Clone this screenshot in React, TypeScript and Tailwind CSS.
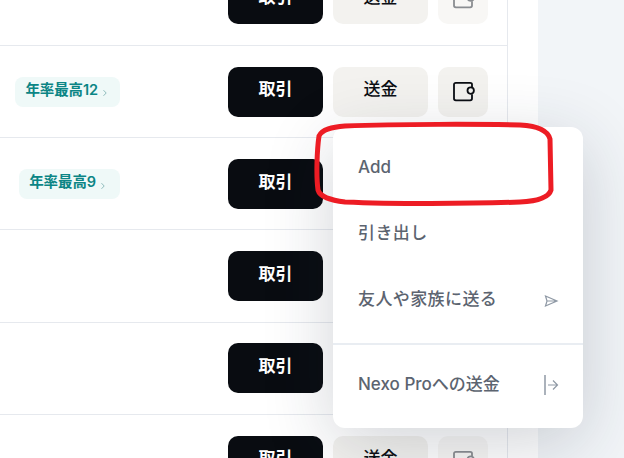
import React from "react";

const font = { fontFamily: '"Inter", "Noto Sans CJK JP", sans-serif' };

function WalletIcon({ active }: { active?: boolean }) {
  return (
    <svg
      width="24"
      height="24"
      viewBox="0 0 24 24"
      fill="none"
      stroke={active ? "#0b0e13" : "#8a8d91"}
      strokeWidth="1.8"
    >
      <path d="M21 7V4.5C21 3.4 20.2 2.8 19.2 2.8H4.8C3.7 2.8 3 3.5 3 4.6v14c0 1 .7 1.7 1.8 1.7h14.4c1 0 1.8-.7 1.8-1.7v-4.4" />
      <rect x="16.5" y="7.4" width="6.4" height="6.4" rx="3.2" />
    </svg>
  );
}

function Badge({ text, className }: { text: string; className: string }) {
  return (
    <div className={`flex items-center h-[30px] rounded-lg bg-[#eff9f8] text-[14.5px] font-semibold text-[#0b8585] pl-[10px] pb-[4px] ${className}`}>
      <span className="tracking-[-0.1px]">{text}</span>
      <svg width="8" height="8" viewBox="0 0 8 8" fill="none" stroke="#8fbcbc" strokeWidth="1" className="ml-[3px] mt-[7px]">
        <path d="M2.5 1.2 5.2 4 2.5 6.8" />
      </svg>
    </div>
  );
}

function Row({ badge, badgeClass, active }: { badge?: string; badgeClass?: string; active?: boolean }) {
  return (
    <div className="flex items-start h-[92.25px] pt-[20.85px] border-b border-[#e6e9ee] pr-[19px] shrink-0">
      <div className="flex-1 flex justify-end pr-[108px] pt-[10.4px]">
        {badge && <Badge text={badge} className={badgeClass ?? ""} />}
      </div>
      <button className="w-[95px] h-[50px] rounded-[10px] bg-[#090c11] text-white text-[17px] font-semibold pb-[3px]">
        取引
      </button>
      <button
        className={`ml-[10px] w-[95px] h-[50px] rounded-[10px] text-[#0b0e13] text-[17px] font-medium pb-[4px] ${
          active ? "bg-[#f3f2ef]" : "bg-[#f3f2ef]"
        }`}
      >
        送金
      </button>
      <button
        className={`ml-[10px] w-[50px] h-[50px] rounded-[10px] flex items-center justify-center ${
          active ? "bg-[#f3f2ef]" : "bg-[#f8f7f5]"
        }`}
      >
        <WalletIcon active={active} />
      </button>
    </div>
  );
}

function MenuItem({ label, icon, className }: { label: string; icon?: React.ReactNode; className: string }) {
  return (
    <div className={`flex items-center justify-between pl-[25px] pr-[25px] text-[17px] font-medium text-[#5c6470] ${className}`}>
      <span>{label}</span>
      {icon}
    </div>
  );
}

export default function App() {
  return (
    <div style={font} className="relative w-[624px] h-[458px] overflow-hidden bg-[#f2f5f8] flex">
      <div className="w-[538px] h-full bg-white shrink-0">
        <div className="w-[508px] h-[520px] border-r border-[#e6e9ee] -mt-[46.5px] flex flex-col">
          <Row />
          <Row badge="年率最高12" badgeClass="pr-[11px]" active />
          <Row badge="年率最高9" badgeClass="pr-[13px]" />
          <Row />
          <Row />
          <Row />
        </div>
      </div>

      <div className="absolute left-[333px] top-[127px] w-[250px] h-[301px] rounded-[12px] bg-white shadow-[0_16px_70px_rgba(30,41,59,0.2)]">
        <MenuItem label="Add" className="h-[80px] pt-[1px]" />
        <MenuItem label="引き出し" className="h-[52px] pt-[1px] tracking-[0.4px]" />
        <MenuItem
          label="友人や家族に送る"
          className="h-[81px] tracking-[0.4px]"
          icon={
            <svg width="16" height="16" viewBox="0 0 16 16" fill="none" stroke="#8f99a5" strokeWidth="1.2" className="mt-[3px] mr-[-1px]">
              <path d="M2.5 3 14 8 2.5 13 4 8ZM4 8h10" />
            </svg>
          }
        />
        <div className="h-[2px] bg-[#e9edf2] mt-[3px]" />
        <MenuItem
          label="Nexo Proへの送金"
          className="h-[80px]"
          icon={
            <svg width="16" height="20" viewBox="0 0 16 20" fill="none" stroke="#8f99a5" strokeWidth="1.2" className="mr-[-1px]">
              <path d="M2 0v20" strokeWidth="1.5" />
              <path d="M5 10h9.5M10 5.5l4.5 4.5-4.5 4.5" />
            </svg>
          }
        />
      </div>

      {/* red marker drawn over the screenshot */}
      <svg
        className="absolute left-[312px] top-[118px]"
        width="246"
        height="92"
        viewBox="0 0 246 92"
        fill="none"
        stroke="#ed1c24"
        strokeWidth="5"
      >
        <path d="M33 8C88 6 168 6 208 7 226 8 236 13 238 21L239 72C237 79 228 83 208 84 158 86 78 86 33 84 18 82 8 79 6 72 4 57 5 32 7 18 10 11 20 9 33 8Z" />
      </svg>
    </div>
  );
}
